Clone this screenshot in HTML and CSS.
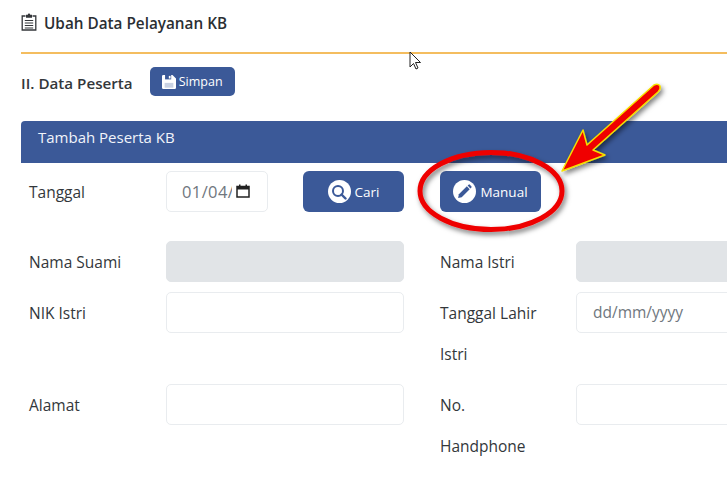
FILE: index.html
```html
<!DOCTYPE html>
<html lang="id">
<head>
<meta charset="utf-8">
<title>Ubah Data Pelayanan KB</title>
<link rel="stylesheet" href="styles.css">
</head>
<body>
<main class="page">
  <h1 class="title">
    <svg class="title-icon" viewBox="0 0 16 18" width="16" height="18"><path d="M4.500 3H1.200v14h13.600V3h-3.300" fill="none" stroke="#33363a" stroke-width="1.300"/><path d="M5 1.800h1.800a1.200 1.200 0 0 1 2.400 0H11v3H5z" fill="#33363a"/><path d="M3.800 7.500h8.400M3.800 10h8.400M3.800 12.500h8.400M3.800 15h8.400" stroke="#33363a" stroke-width="1.200"/></svg>
    Ubah Data Pelayanan KB
  </h1>
  <hr class="rule">
  <div class="section-head">
    <h2 class="section-title">II. Data Peserta</h2>
    <button class="btn btn-small" type="button">
      <svg viewBox="0 0 16 16" width="14" height="14"><path d="M0 1.500A1.500 1.500 0 0 1 1.500 0H12l4 4v10.500a1.500 1.500 0 0 1-1.500 1.500h-13A1.500 1.500 0 0 1 0 14.500z" fill="#fff"/><path d="M3.500 0h7v5h-7z" fill="#3b5998"/><path d="M7.800 1h2v3h-2z" fill="#fff"/><path d="M3 9h10v5.500H3z" fill="#c9d2e3"/></svg>
      Simpan
    </button>
  </div>
  <section class="card">
    <div class="card-head">Tambah Peserta KB</div>
    <div class="form">
      <div class="row row-first">
        <label class="label">Tanggal</label>
        <div class="control date-short"><span class="date-text">01/04/</span>
          <svg class="cal" viewBox="0 0 14 14" width="14" height="14"><path d="M1 2.500h12v10.500H1z" fill="none" stroke="#222" stroke-width="1.500"/><path d="M1 2h12v3.500H1zM3 .5h1.500V3H3zM9.500 .5H11V3H9.500z" fill="#222"/></svg>
        </div>
        <div class="gap-a"></div>
        <button class="btn btn-big" type="button">
          <span class="disc"><svg viewBox="0 0 16 16" width="16" height="16"><circle cx="7" cy="7" r="5" fill="none" stroke="#3b5998" stroke-width="2"/><path d="M10.500 10.500l4 4" stroke="#3b5998" stroke-width="2.400" stroke-linecap="round"/></svg></span>
          Cari
        </button>
        <div class="gap-b"></div>
        <button class="btn btn-big" type="button">
          <span class="disc"><svg viewBox="0 0 16 16" width="15" height="15"><path d="M2 11l8.500-8.500 3 3L5 14l-3.800.8z" fill="#3b5998"/><path d="M11.300 1.700l1-1a1 1 0 0 1 1.400 0l1.600 1.600a1 1 0 0 1 0 1.400l-1 1z" fill="#3b5998"/></svg></span>
          Manual
        </button>
      </div>
      <div class="row row-name">
        <label class="label">Nama Suami</label>
        <div class="control wide disabled"></div>
        <label class="label label-right">Nama Istri</label>
        <div class="control wide disabled"></div>
      </div>
      <div class="row row-nik">
        <label class="label">NIK Istri</label>
        <div class="control wide"></div>
        <label class="label label-right">Tanggal Lahir Istri</label>
        <div class="control wide placeholder">dd/mm/yyyy</div>
      </div>
      <div class="row row-alamat">
        <label class="label">Alamat</label>
        <div class="control wide"></div>
        <label class="label label-right">No. Handphone</label>
        <div class="control wide"></div>
      </div>
    </div>
  </section>
</main>
<svg class="overlay" viewBox="0 0 727 480" width="727" height="480" aria-hidden="true">
  <defs>
    <filter id="shadow" x="-20%" y="-20%" width="140%" height="140%"><feDropShadow dx="2" dy="3" stdDeviation="2.500" flood-color="#000" flood-opacity=".5"/></filter>
  </defs>
  <ellipse cx="491" cy="191" rx="71" ry="38.500" fill="none" stroke="#ee0000" stroke-width="5" filter="url(#shadow)"/>
  <path d="M562 171L583 130L587 145L654 85Q658 83 660 86Q661 89 658 92L593 150L605 155Z" fill="#f00000" stroke="#f5e000" stroke-width="1.500" stroke-linejoin="round" filter="url(#shadow)"/>
  <path d="M410 52v15l3.500-3.500 2.500 5.500 2-1-2.500-5.500h5z" fill="#fff" stroke="#222" stroke-width="1"/>
</svg>
</body>
</html>
```
FILE: styles.css
```css
* { box-sizing: border-box; }
html, body { margin: 0; width: 727px; height: 480px; overflow: hidden; background: #fff; }
body { font-family: "Open Sans", "Noto Sans", sans-serif; color: #33373b; position: relative; }
.page { padding: 12px 0 0 21px; width: 900px; }
.title { display: flex; align-items: center; gap: 7px; margin: 0; height: 21px; font-size: 15.300px; font-weight: 600; color: #2b2f33; }
.title-icon { flex: none; margin-top: -2px; }
.rule { margin: 19px 0 0; border: 0; border-top: 2px solid #f4bd5f; }
.section-head { display: flex; align-items: center; gap: 17px; margin-top: 13px; height: 29px; }
.section-title { margin: 3px 0 0; font-size: 15.200px; font-weight: 600; color: #33373b; }
.btn { display: flex; align-items: center; justify-content: center; border: 0; color: #fff; background: #3b5998; font-family: inherit; border-radius: 5px; padding: 0; }
.btn-small { width: 85px; height: 29px; gap: 3px; font-size: 12.500px; }
.btn-big { width: 101px; height: 41px; gap: 4px; font-size: 13.500px; border-radius: 6px; }
.disc { width: 23px; height: 23px; border-radius: 50%; background: #fff; display: flex; align-items: center; justify-content: center; }
.card { margin-top: 25px; }
.card-head { height: 42px; padding: 6px 0 0 17px; background: #3b5998; color: #f1f4fa; font-size: 15px; border-radius: 4px 0 0 0; line-height: 21px; }
.form { padding: 8px 0 0 8px; font-size: 15.500px; }
.row { display: flex; align-items: flex-start; }
.row-name { margin-top: 28px; }
.row-nik { margin-top: 9px; }
.row-alamat { margin-top: 9px; }
.label { flex: none; width: 137px; padding-top: 1px; line-height: 41px; }
.label-right { width: 136px; margin-left: 36px; padding-right: 26px; }
.control { height: 41px; border: 1px solid #e9ecef; border-radius: 5px; background: #fff; flex: none; }
.wide { width: 238px; }
.disabled { background: #e1e4e7; border-color: #e1e4e7; }
.placeholder { padding-left: 16px; line-height: 39px; color: #70777e; }
.date-short { width: 102px; display: flex; align-items: center; padding-left: 15px; color: #70777e; position: relative; }
.date-text { font-size: 16.500px; letter-spacing: .4px; width: 50px; overflow: hidden; white-space: nowrap; }
.cal { position: absolute; left: 69px; top: 12px; }
.gap-a { width: 35px; flex: none; }
.gap-b { width: 36px; flex: none; }
.overlay { position: absolute; left: 0; top: 0; pointer-events: none; }
```
